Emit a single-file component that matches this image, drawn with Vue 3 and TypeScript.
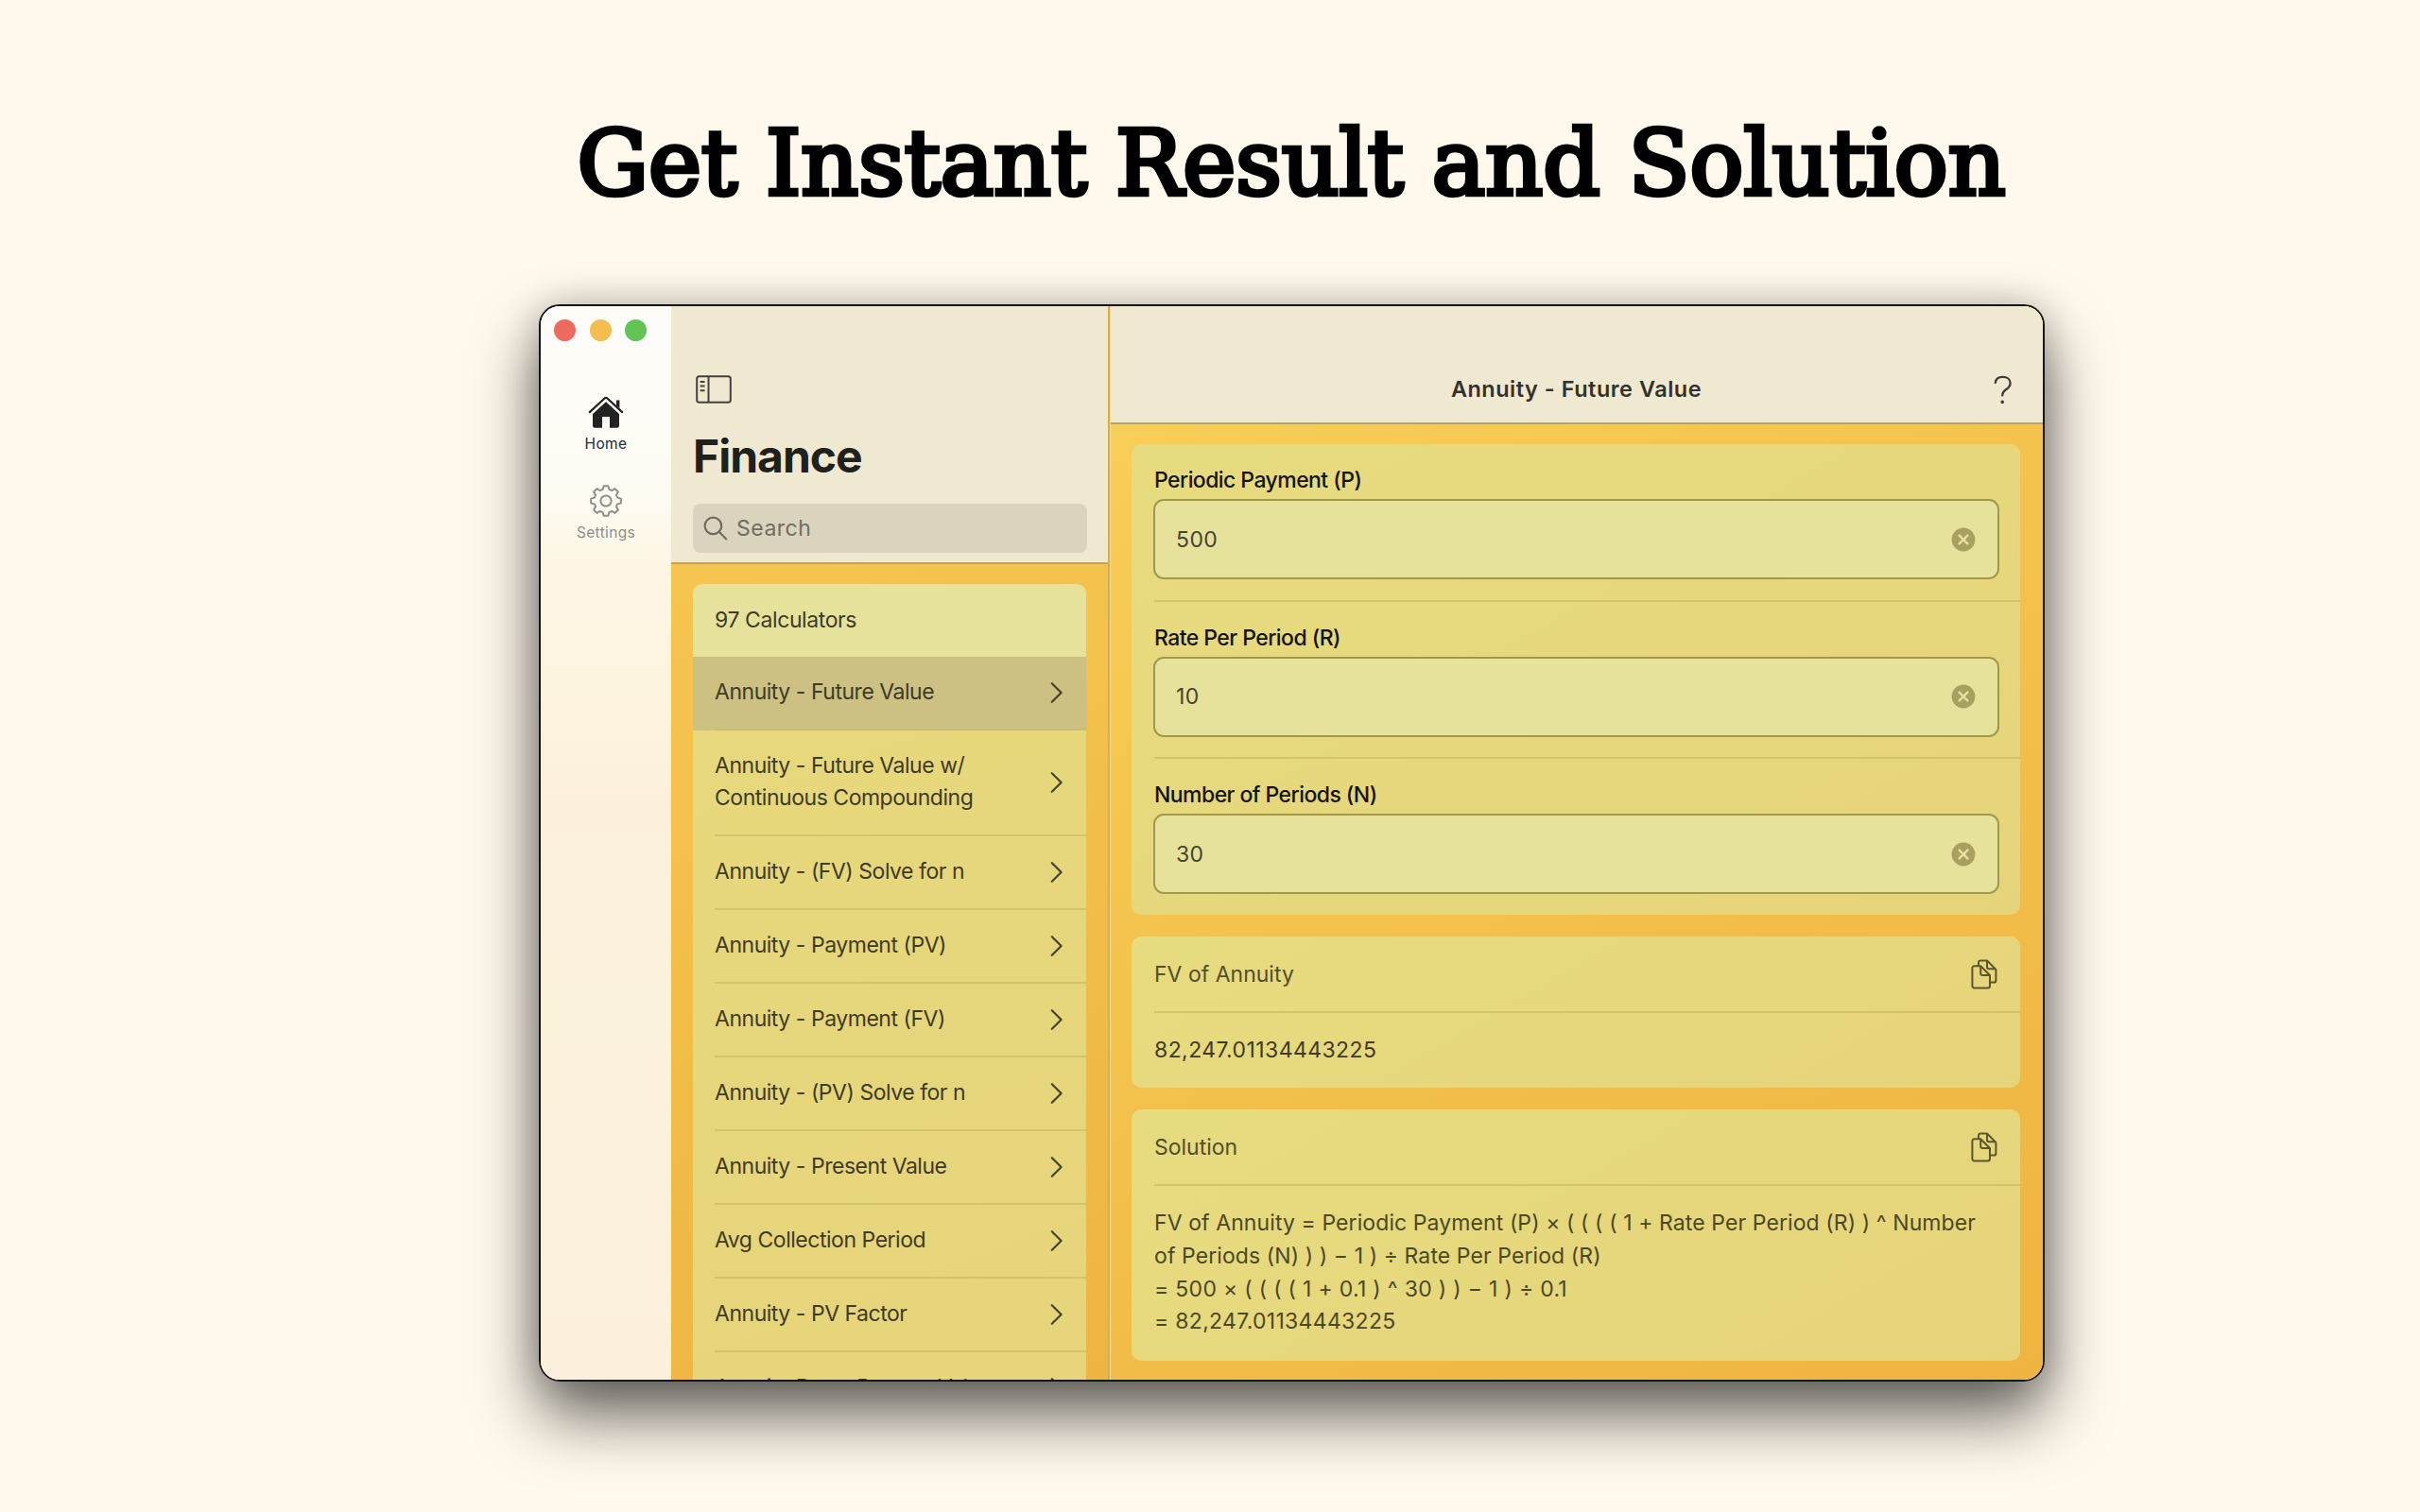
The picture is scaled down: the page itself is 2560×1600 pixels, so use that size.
<script setup lang="ts">
import { ref } from 'vue'

interface Field {
  label: string
  value: string
}

const calculators = ref<string[]>([
  'Annuity - Future Value',
  'Annuity - Future Value w/ Continuous Compounding',
  'Annuity - (FV) Solve for n',
  'Annuity - Payment (PV)',
  'Annuity - Payment (FV)',
  'Annuity - (PV) Solve for n',
  'Annuity - Present Value',
  'Avg Collection Period',
  'Annuity - PV Factor',
  'Annuity Due - Present Value',
])
const selected = ref(0)

const fields = ref<Field[]>([
  { label: 'Periodic Payment (P)', value: '500' },
  { label: 'Rate Per Period (R)', value: '10' },
  { label: 'Number of Periods (N)', value: '30' },
])

const solution = [
  'FV of Annuity = Periodic Payment (P) × ( ( ( ( 1 + Rate Per Period (R) ) ^ Number',
  'of Periods (N) ) ) − 1 ) ÷ Rate Per Period (R)',
  '= 500 × ( ( ( ( 1 + 0.1 ) ^ 30 ) ) − 1 ) ÷ 0.1',
  '= 82,247.01134443225',
]

// Eight-toothed gear outline, centred on the origin
const gear = (() => {
  const pts: string[] = []
  const teeth = 8
  for (let i = 0; i < teeth; i++) {
    const a = (i / teeth) * Math.PI * 2 - Math.PI / 2
    for (const [off, r] of [[-0.27, 12.6], [-0.15, 16], [0.15, 16], [0.27, 12.6]]) {
      pts.push(`${(Math.cos(a + off) * r).toFixed(2)},${(Math.sin(a + off) * r).toFixed(2)}`)
    }
  }
  return pts.join(' ')
})()
</script>

<template>
  <main class="stage">
    <h1 class="headline"><span>Get Instant Result and Solution</span></h1>

    <div class="window">
      <nav class="rail">
        <div class="lights"><i class="red"></i><i class="amber"></i><i class="green"></i></div>
        <a class="tab active">
          <svg width="38" height="35" viewBox="0 0 38 35">
            <path d="M19 6.8 33 19.4V32a2.2 2.2 0 0 1-2.2 2.2H23V22.4h-8V34.2H7.2A2.2 2.2 0 0 1 5 32V19.4Z" fill="#222" />
            <path d="M1.8 17.6 17.6 3a2 2 0 0 1 2.8 0L36.2 17.6" fill="none" stroke="#222" stroke-width="2.2" stroke-linecap="round" />
            <path d="M30 5h3.4v8.6L30 10.4Z" fill="#222" />
          </svg>
          <span>Home</span>
        </a>
        <a class="tab">
          <svg width="36" height="36" viewBox="-18 -18 36 36" fill="none" stroke="#8e8e8c" stroke-width="2" stroke-linejoin="round">
            <polygon :points="gear" />
            <circle r="5.6" />
          </svg>
          <span>Settings</span>
        </a>
      </nav>

      <section class="list-pane">
        <header class="list-head">
          <svg class="toggle" width="38" height="30" viewBox="0 0 38 30" fill="none" stroke="#44423c" stroke-width="2">
            <rect x="1.2" y="1.2" width="35.6" height="27.6" rx="2.6" />
            <path d="M13.5 1v28M4.6 7h5M4.6 11.6h5M4.6 16.2h5" />
          </svg>
          <h2>Finance</h2>
          <div class="search">
            <svg width="26" height="26" viewBox="0 0 26 26" fill="none" stroke="#716d60" stroke-width="2.2" stroke-linecap="round">
              <circle cx="10.4" cy="10.4" r="8.8" />
              <path d="m17 17 7.2 7.4" />
            </svg>
            <span>Search</span>
          </div>
        </header>
        <div class="list-body">
          <div class="list-card">
            <div class="count">97 Calculators</div>
            <div
              v-for="(name, i) in calculators"
              :key="name"
              class="row"
              :class="{ selected: i === selected }"
            >
              <div class="row-in">
                <span>{{ name }}</span>
                <svg width="14" height="24" viewBox="0 0 14 24" fill="none" stroke="#45412b" stroke-width="2.2" stroke-linecap="round" stroke-linejoin="round">
                  <path d="M1.8 2.2 11.6 12 1.8 21.8" />
                </svg>
              </div>
            </div>
          </div>
        </div>
      </section>

      <section class="detail">
        <header class="detail-head">
          <span class="title">Annuity - Future Value</span>
          <svg class="help" width="20" height="32" viewBox="0 0 20 32" fill="none" stroke="#3f3d37" stroke-width="2.3" stroke-linecap="round">
            <path d="M1.8 8C2.2 4 5.2 1.8 9.6 1.8c4.6 0 8 2.6 8 6.6 0 3.2-1.8 4.8-4.6 6.8-2.6 1.8-3.8 3.2-3.8 6.4" />
            <circle cx="9.2" cy="28.4" r="1.1" fill="#3f3d37" stroke-width="1.4" />
          </svg>
        </header>
        <div class="detail-body">
          <div class="card fields">
            <div v-for="f in fields" :key="f.label" class="field">
              <label>{{ f.label }}</label>
              <div class="input">
                <span>{{ f.value }}</span>
                <svg width="26" height="26" viewBox="0 0 26 26">
                  <circle cx="13" cy="13" r="12.4" fill="#a8a061" />
                  <path d="m8.6 8.6 8.8 8.8M17.4 8.6l-8.8 8.8" stroke="#e6e19b" stroke-width="2.4" stroke-linecap="round" />
                </svg>
              </div>
            </div>
          </div>

          <div class="card result">
            <div class="card-top">
              <span>FV of Annuity</span>
              <svg width="28" height="32" viewBox="0 0 28 32" fill="none" stroke="#5b562f" stroke-width="2" stroke-linejoin="round">
                <path d="M8 7V3.6A2.2 2.2 0 0 1 10.2 1.4H17L26.4 11v11.4a2.2 2.2 0 0 1-2.2 2.2H20.5M17 1.4V8a2.2 2.2 0 0 0 2.2 2.2h7" />
                <path d="M3.6 7.2H10.2l9.8 9.8v11.2a2.2 2.2 0 0 1-2.2 2.2H3.6a2.2 2.2 0 0 1-2.2-2.2V9.4a2.2 2.2 0 0 1 2.2-2.2ZM10.2 7.2v7.6a2.2 2.2 0 0 0 2.2 2.2h7.6" />
              </svg>
            </div>
            <div class="value">82,247.01134443225</div>
          </div>

          <div class="card solution">
            <div class="card-top">
              <span>Solution</span>
              <svg width="28" height="32" viewBox="0 0 28 32" fill="none" stroke="#5b562f" stroke-width="2" stroke-linejoin="round">
                <path d="M8 7V3.6A2.2 2.2 0 0 1 10.2 1.4H17L26.4 11v11.4a2.2 2.2 0 0 1-2.2 2.2H20.5M17 1.4V8a2.2 2.2 0 0 0 2.2 2.2h7" />
                <path d="M3.6 7.2H10.2l9.8 9.8v11.2a2.2 2.2 0 0 1-2.2 2.2H3.6a2.2 2.2 0 0 1-2.2-2.2V9.4a2.2 2.2 0 0 1 2.2-2.2ZM10.2 7.2v7.6a2.2 2.2 0 0 0 2.2 2.2h7.6" />
              </svg>
            </div>
            <div class="steps">
              <div v-for="line in solution" :key="line" :class="{ numeric: line.startsWith('=') }">{{ line }}</div>
            </div>
          </div>
        </div>
      </section>
    </div>
  </main>
</template>

<style>
body {
  margin: 0;
  background: #fff8ec;
}
</style>

<style scoped>
* {
  box-sizing: border-box;
}
.stage {
  width: 2560px;
  height: 1600px;
  overflow: hidden;
  background: #fff8ec;
  font-family: Inter, 'Liberation Sans', sans-serif;
  font-size: 23px;
  color: #3f3b26;
  padding-left: 570px;
}
.headline {
  margin: 0;
  width: 1593px;
  height: 322px;
  padding-top: 108px;
  display: flex;
  justify-content: center;
  font: normal 96px/130px 'DejaVu Serif Condensed', 'DejaVu Serif', serif;
  font-stretch: condensed;
  color: #000;
  -webkit-text-stroke: 4.5px #000;
}
.headline span {
  white-space: nowrap;
  transform: scaleX(1.095);
}
.window {
  display: flex;
  width: 1593px;
  height: 1140px;
  border: 2px solid #15161a;
  border-radius: 22px;
  overflow: hidden;
  box-shadow: 0 36px 68px rgba(0, 0, 0, 0.6), 0 0 38px rgba(0, 0, 0, 0.2);
}

/* navigation rail */
.rail {
  width: 138px;
  display: flex;
  flex-direction: column;
  align-items: center;
  background: linear-gradient(#fdfcf9 0, #fdfcf5 14%, #fdf6e5 25%, #fdf4e0 35%, #fcf0dc 46%, #fbf2dc 65%, #fcf0dc 100%);
}
.lights {
  display: flex;
  gap: 14.5px;
  width: 100%;
  padding: 14px 0 0 14px;
  height: 94px;
}
.lights i {
  width: 23px;
  height: 23px;
  border-radius: 50%;
}
.red { background: #ec6b5e; }
.amber { background: #f4be4f; }
.green { background: #61c454; }
.tab {
  display: flex;
  flex-direction: column;
  align-items: center;
  height: 93.5px;
  color: #8e8e8c;
  font-size: 15.5px;
  letter-spacing: 0.35px;
  line-height: 20px;
}
.tab svg {
  height: 36px;
  flex: none;
}
.tab span {
  margin-top: 6px;
}
.tab.active {
  color: #2a2a28;
}

/* calculator list */
.list-pane {
  width: 462px;
  display: flex;
  flex-direction: column;
  background: linear-gradient(160deg, #f7ca53, #eeb442);
}
.list-head {
  height: 273px;
  flex: none;
  padding: 73px 22px 0 23px;
  background: #f0e9d2;
  border-bottom: 2px solid #c8a53c;
  display: flex;
  flex-direction: column;
}
.toggle {
  margin-left: 3px;
}
h2 {
  margin: 25.5px 0 0;
  font-size: 48px;
  line-height: 60px;
  font-weight: 700;
  letter-spacing: -1px;
  color: #20201c;
}
.search {
  margin-top: 20.5px;
  height: 52px;
  border-radius: 8px;
  background: #dad3bd;
  display: flex;
  align-items: center;
  padding-left: 11px;
  gap: 9px;
  letter-spacing: 0.5px;
  color: #716d60;
}
.list-body {
  flex: 1;
  min-height: 0;
  overflow: hidden;
  padding: 21px 23px 0;
}
.list-card {
  border-radius: 10px 10px 0 0;
  overflow: hidden;
  background: linear-gradient(160deg, #e7d97d, #e6d47a);
  letter-spacing: -0.47px;
}
.count {
  height: 77px;
  padding-left: 23px;
  line-height: 76px;
  letter-spacing: -0.4px;
  background: #e6e29b;
}
.row {
  padding-left: 23px;
}
.row-in {
  height: 78px;
  display: flex;
  align-items: center;
  justify-content: space-between;
  padding-right: 24px;
  border-bottom: 2px solid #d3c46b;
  line-height: 33.3px;
}
.row-in span {
  width: 300px;
}
.row:nth-child(3) .row-in {
  height: 111.5px;
}
.row.selected {
  background: #ccc083;
}
.row.selected .row-in {
  border-color: #ccbb73;
}

/* detail pane */
.detail {
  flex: 1;
  display: flex;
  flex-direction: column;
  border-left: 2px solid #d9ab4c;
  background: linear-gradient(150deg, #f9d15a, #f4c54f 35%, #eeb440);
  box-shadow: inset 1px 0 #f2dc9a;
}
.detail-head {
  height: 125px;
  flex: none;
  margin-left: 1px;
  display: grid;
  grid-template-columns: 1fr auto 1fr;
  padding: 73px 32px 0 31px;
  background: #f0e9d2;
  border-bottom: 2px solid #bba468;
}
.title {
  grid-column: 2;
  font-weight: 600;
  font-size: 23.5px;
  letter-spacing: 0.5px;
  line-height: 32px;
  margin-top: -1px;
  color: #33322c;
}
.help {
  justify-self: end;
}
.detail-body {
  flex: 1;
  padding: 21px 24px 0 23px;
}
.card {
  border-radius: 10px;
  background: linear-gradient(150deg, #e7db80, #e6d87d 40%, #e6d47a);
  padding-left: 24px;
  margin-bottom: 23px;
}
.fields {
  height: 498px;
}
.field {
  height: 166.5px;
  padding: 20px 22px 0 0;
  border-bottom: 2px solid #d3c46b;
}
.field:last-child {
  border-bottom: 0;
}
label {
  display: block;
  height: 38px;
  line-height: 36.5px;
  font-weight: 500;
  letter-spacing: -0.56px;
  color: #15130a;
}
.input {
  height: 85px;
  margin-left: -1px;
  border: 2px solid #a29849;
  border-radius: 11px;
  background: #e6e29c;
  display: flex;
  align-items: center;
  justify-content: space-between;
  padding: 0 23px 0 22px;
  letter-spacing: 0.4px;
  color: #454432;
}
.result {
  height: 160px;
}
.solution {
  height: 266px;
  margin-bottom: 0;
}
.card-top {
  height: 81px;
  display: flex;
  align-items: center;
  justify-content: space-between;
  padding-right: 24px;
  border-bottom: 2px solid #d3c46b;
  color: #544f2b;
}
.value {
  line-height: 78px;
  letter-spacing: 0.42px;
}
.steps {
  padding-top: 22px;
  line-height: 34.8px;
  letter-spacing: 0.09px;
  white-space: nowrap;
  color: #4c4826;
}
.steps .numeric {
  letter-spacing: 0.3px;
}
</style>
